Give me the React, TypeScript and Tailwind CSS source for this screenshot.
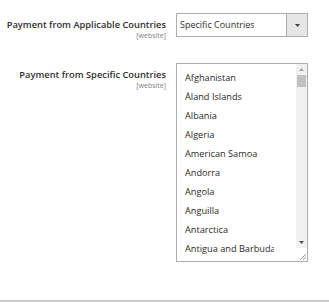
import React from "react";

const countries = [
  "Afghanistan",
  "Åland Islands",
  "Albania",
  "Algeria",
  "American Samoa",
  "Andorra",
  "Angola",
  "Anguilla",
  "Antarctica",
  "Antigua and Barbuda",
];

function Label({ text }: { text: string }) {
  return (
    <div className="w-[166px] shrink-0 text-right whitespace-nowrap">
      <div className="text-[9.3px] font-semibold leading-[12px] text-[#303030]">{text}</div>
      <div className="text-[7px] leading-[9px] text-[#808080]">[website]</div>
    </div>
  );
}

export default function App() {
  return (
    <div
      className="w-[329px] h-[302px] bg-white flex flex-col"
      style={{ fontFamily: '"Open Sans", sans-serif' }}
    >
      <div className="flex-1 flex flex-col pt-[13px]">
        <div className="flex items-start gap-[10px] h-[24px]">
          <div className="pt-[6px]">
            <Label text="Payment from Applicable Countries" />
          </div>
          <div className="w-[132px] h-[24px] border border-[#adadad] flex bg-white">
            <div className="flex-1 pl-[3px] text-[9px] leading-[22px] text-[#303030]">
              Specific Countries
            </div>
            <div className="w-[21px] border-l border-[#adadad] bg-[#e6e6e6] flex items-center justify-center">
              <svg width="5" height="3" viewBox="0 0 5 3">
                <path d="M0 0 L5 0 L2.5 3 Z" fill="#404040" />
              </svg>
            </div>
          </div>
        </div>

        <div className="flex items-start gap-[10px] mt-[26px]">
          <div className="pt-[6px]">
            <Label text="Payment from Specific Countries" />
          </div>
          <div className="w-[132px] h-[199px] border border-[#adadad] flex bg-white overflow-hidden">
            <div className="flex-1 min-w-0 pt-[4px] pl-[8px] pr-[22px]">
              {countries.map((c) => (
                <div
                  key={c}
                  className="h-[19px] overflow-hidden text-[9.2px] leading-[19px] text-[#2a2a2a] whitespace-nowrap"
                >
                  {c}
                </div>
              ))}
            </div>
            <div className="w-[11px] flex flex-col bg-[#f1f1f1]">
              <div className="h-[11px] flex items-center justify-center">
                <svg width="5" height="3" viewBox="0 0 5 3">
                  <path d="M0 3 L5 3 L2.5 0 Z" fill="#a3a3a3" />
                </svg>
              </div>
              <div className="mx-[1px] h-[12px] bg-[#c1c1c1]" />
              <div className="flex-1" />
              <div className="h-[11px] flex items-center justify-center">
                <svg width="5" height="3" viewBox="0 0 5 3">
                  <path d="M0 0 L5 0 L2.5 3 Z" fill="#505050" />
                </svg>
              </div>
              <div className="h-[13px] bg-white flex items-end justify-end">
                <svg width="8" height="8" viewBox="0 0 8 8">
                  <path d="M7 1 L1 7 M7 4 L4 7" stroke="#9a9a9a" strokeWidth="1" />
                </svg>
              </div>
            </div>
          </div>
        </div>
      </div>
      <div className="h-[2px] bg-[#cccccc]" />
    </div>
  );
}
